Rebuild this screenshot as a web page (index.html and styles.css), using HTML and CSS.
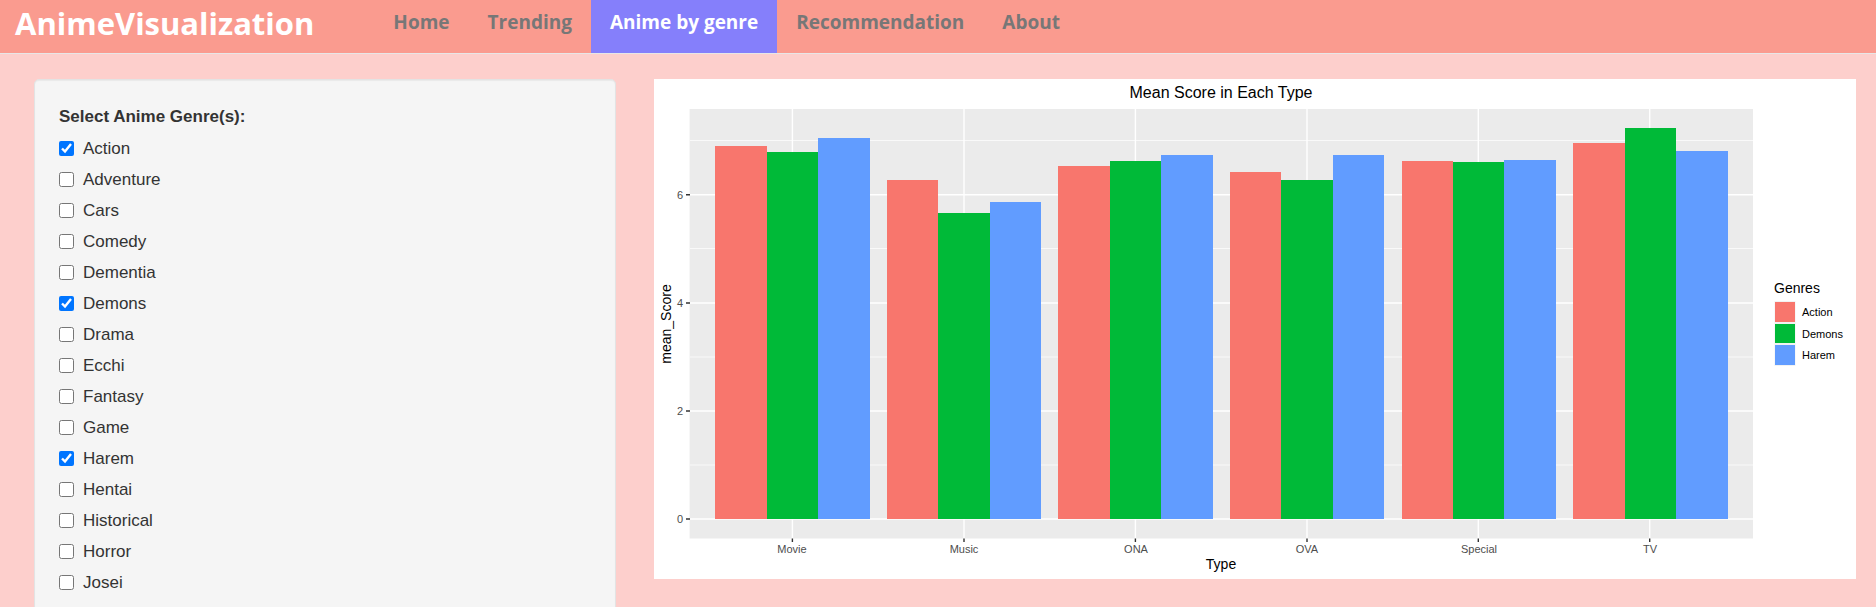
FILE: index.html
```html
<!DOCTYPE html>
<html lang="en">
<head>
<meta charset="utf-8">
<title>AnimeVisualization</title>
<link rel="stylesheet" href="styles.css">
</head>
<body>
<header class="navbar">
  <a class="brand" href="#">AnimeVisualization</a>
  <nav class="tabs">
    <a class="tab" href="#">Home</a>
    <a class="tab" href="#">Trending</a>
    <a class="tab active" href="#" aria-current="page">Anime by genre</a>
    <a class="tab" href="#">Recommendation</a>
    <a class="tab" href="#">About</a>
  </nav>
</header>
<main class="layout">
  <form class="well">
    <fieldset class="genres">
      <legend class="genres-title">Select Anime Genre(s):</legend>
      <label class="option"><input type="checkbox" checked>Action</label>
      <label class="option"><input type="checkbox">Adventure</label>
      <label class="option"><input type="checkbox">Cars</label>
      <label class="option"><input type="checkbox">Comedy</label>
      <label class="option"><input type="checkbox">Dementia</label>
      <label class="option"><input type="checkbox" checked>Demons</label>
      <label class="option"><input type="checkbox">Drama</label>
      <label class="option"><input type="checkbox">Ecchi</label>
      <label class="option"><input type="checkbox">Fantasy</label>
      <label class="option"><input type="checkbox">Game</label>
      <label class="option"><input type="checkbox" checked>Harem</label>
      <label class="option"><input type="checkbox">Hentai</label>
      <label class="option"><input type="checkbox">Historical</label>
      <label class="option"><input type="checkbox">Horror</label>
      <label class="option"><input type="checkbox">Josei</label>
    </fieldset>
  </form>
  <section class="plot">
    <svg class="chart" viewBox="0 0 1202 500" role="img" aria-label="Mean Score in Each Type">
      <rect class="panel" x="35.6" y="30" width="1063.4" height="429.5"/>
      <path class="grid-minor" d="M36 61.5H1099M36 169.5H1099M36 278H1099M36 386H1099"/>
      <path class="grid-major" d="M36 115.8H1099M36 224H1099M36 332H1099M36 440H1099M138.4 30V459.5M310 30V459.5M481.4 30V459.5M653 30V459.5M824.3 30V459.5M995.7 30V459.5"/>
      <path class="action" d="M61 67H113V440H61ZM233 101H284V440H233ZM404 87H456V440H404ZM576 93H627V440H576ZM748 82H799V440H748ZM919 64H971V440H919Z"/>
      <path class="demons" d="M113 73H164V440H113ZM284 134H336V440H284ZM456 82H507V440H456ZM627 101H679V440H627ZM799 83H850V440H799ZM971 49H1022V440H971Z"/>
      <path class="harem" d="M164 59H216V440H164ZM336 123H387V440H336ZM507 76H559V440H507ZM679 76H730V440H679ZM850 81H902V440H850ZM1022 72H1074V440H1022Z"/>
      <path class="ticks" d="M32 115.8H36M32 224H36M32 332H36M32 440H36M138.4 459.5V463M310 459.5V463M481.4 459.5V463M653 459.5V463M824.3 459.5V463M995.7 459.5V463"/>
      <text class="title" x="567" y="19">Mean Score in Each Type</text>
      <g class="y-labels">
        <text x="29" y="120">6</text>
        <text x="29" y="228">4</text>
        <text x="29" y="336">2</text>
        <text x="29" y="444">0</text>
      </g>
      <g class="x-labels">
        <text x="138" y="474">Movie</text>
        <text x="310" y="474">Music</text>
        <text x="482" y="474">ONA</text>
        <text x="653" y="474">OVA</text>
        <text x="825" y="474">Special</text>
        <text x="996" y="474">TV</text>
      </g>
      <text class="axis-title" x="567" y="490">Type</text>
      <text class="axis-title" transform="translate(17 245) rotate(-90)">mean_Score</text>
      <text class="legend-title" x="1120" y="214">Genres</text>
      <rect class="key" x="1120.5" y="222" width="21" height="65"/>
      <rect class="action" x="1121" y="223" width="20" height="20"/>
      <rect class="demons" x="1121" y="245" width="20" height="19"/>
      <rect class="harem" x="1121" y="266" width="20" height="20"/>
      <g class="legend-labels">
        <text x="1148" y="237">Action</text>
        <text x="1148" y="259">Demons</text>
        <text x="1148" y="280">Harem</text>
      </g>
    </svg>
  </section>
</main>
</body>
</html>
```
FILE: styles.css
```css
* { box-sizing: border-box; }

body {
  margin: 0;
  background: #fdcfcc;
  color: #333;
  font-family: "Liberation Sans", Arial, sans-serif;
}

.navbar {
  display: flex;
  background: #fa9b8f;
  border-bottom: 1px solid #e7e7e7;
  font-family: "Open Sans", "Noto Sans", sans-serif;
  font-weight: 700;
}

.brand {
  padding-left: 15px;
  margin-right: 60px;
  color: #fff;
  font-size: 31px;
  line-height: 46px;
  text-decoration: none;
}

.tabs { display: flex; }

.tab {
  padding: 0 19px 9px;
  color: #777;
  font-size: 19px;
  line-height: 44px;
  text-decoration: none;
}

.tab.active { background: #857ffb; color: #fff; }

.layout {
  display: grid;
  grid-template-columns: 582fr 1202fr;
  gap: 38px;
  padding: 25px 20px 0 34px;
  height: calc(100vh - 54px);
  overflow: hidden;
}

.well {
  padding: 24px;
  background: #f5f5f5;
  border: 1px solid #e3e3e3;
  border-radius: 5px;
  box-shadow: inset 0 1px 1px rgba(0, 0, 0, 0.05);
}

.genres {
  display: flex;
  flex-direction: column;
  margin: 0;
  padding: 0;
  border: 0;
}

.genres-title {
  padding: 0;
  margin-bottom: 4px;
  font-size: 17px;
  font-weight: 700;
  line-height: 25px;
}

.option {
  display: flex;
  align-items: center;
  gap: 9px;
  font-size: 17px;
  line-height: 31px;
}

.option input {
  width: 15px;
  height: 15px;
  margin: 0;
  accent-color: #0075ff;
}

.plot { align-self: start; background: #fff; }

.chart {
  display: block;
  width: 100%;
  height: auto;
  font-family: "Liberation Sans", Arial, sans-serif;
}

.panel { fill: #ebebeb; }
.grid-minor { stroke: #fff; stroke-width: 0.7; }
.grid-major { stroke: #fff; stroke-width: 1.4; }
.ticks { stroke: #333; stroke-width: 1.4; }
.action { fill: #f8766d; }
.demons { fill: #00ba38; }
.harem { fill: #619cff; }
.key { fill: #f2f2f2; }
.title { font-size: 16px; text-anchor: middle; }
.axis-title { font-size: 14px; text-anchor: middle; }
.legend-title { font-size: 14px; }
.x-labels { font-size: 11px; fill: #4d4d4d; text-anchor: middle; }
.y-labels { font-size: 11px; fill: #4d4d4d; text-anchor: end; }
.legend-labels { font-size: 11px; }
```
